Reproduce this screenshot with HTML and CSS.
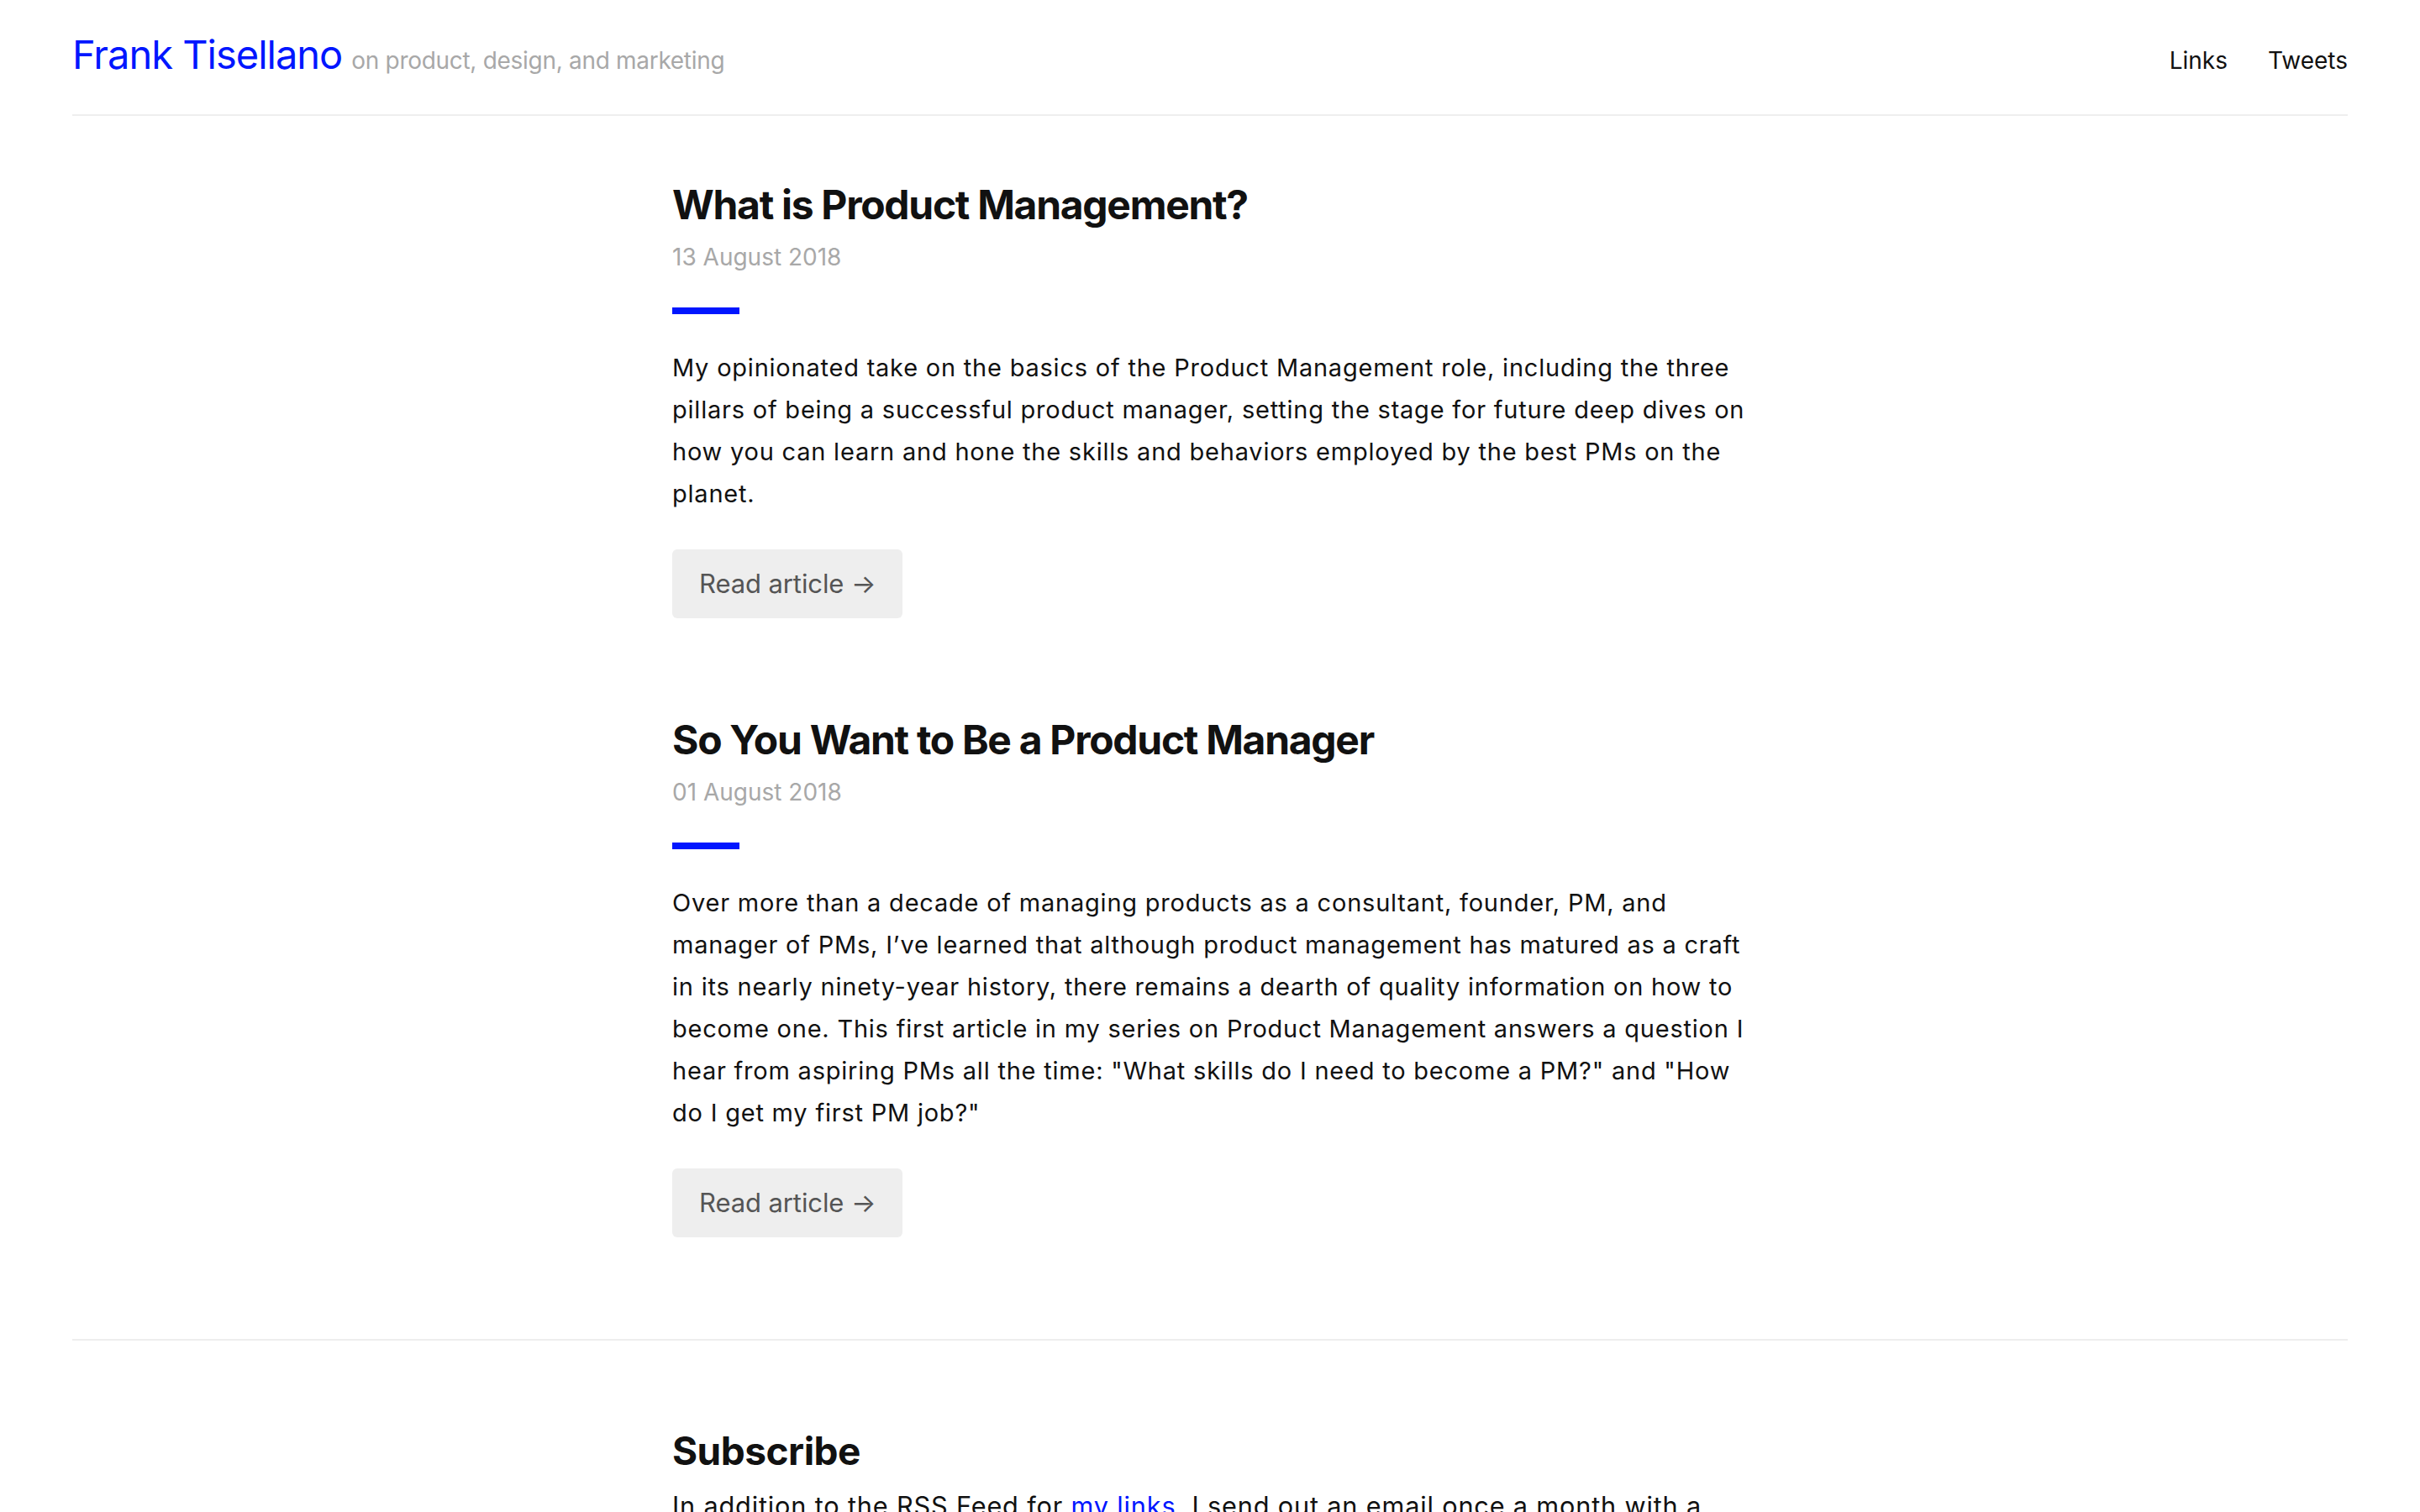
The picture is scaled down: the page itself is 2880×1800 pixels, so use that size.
FILE: index.html
```html
<!DOCTYPE html>
<html lang="en">
<head>
<meta charset="utf-8">
<title>Frank Tisellano</title>
<link rel="stylesheet" href="styles.css">
</head>
<body>
<div class="page">
  <header class="site-header">
    <div class="brand">
      <a class="site-title" href="#">Frank Tisellano</a>
      <span class="tagline">on product, design, and marketing</span>
    </div>
    <nav class="nav">
      <a href="#">Links</a>
      <a href="#">Tweets</a>
    </nav>
  </header>

  <main class="column">
    <article class="post">
      <h2 class="post-title">What is Product Management?</h2>
      <div class="post-date">13 August 2018</div>
      <div class="accent"></div>
      <p class="post-excerpt">My opinionated take on the basics of the Product Management role, including the three pillars of being a successful product manager, setting the stage for future deep dives on how you can learn and hone the skills and behaviors employed by the best PMs on the planet.</p>
      <a class="btn" href="#">Read article →</a>
    </article>

    <article class="post">
      <h2 class="post-title">So You Want to Be a Product Manager</h2>
      <div class="post-date">01 August 2018</div>
      <div class="accent"></div>
      <p class="post-excerpt">Over more than a decade of managing products as a consultant, founder, PM, and manager of PMs, I’ve learned that although product management has matured as a craft in its nearly ninety-year history, there remains a dearth of quality information on how to become one. This first article in my series on Product Management answers a question I hear from aspiring PMs all the time: "What skills do I need to become a PM?" and "How do I get my first PM job?"</p>
      <a class="btn" href="#">Read article →</a>
    </article>
  </main>

  <hr class="rule">

  <section class="column subscribe">
    <h2 class="sub-title">Subscribe</h2>
    <p class="sub-text">In addition to the RSS Feed for <a class="inline-link" href="#">my links</a>, I send out an email once a month with a roundup of my latest writing, plus the most interesting things I’ve read, watched, and listened to.</p>
  </section>
</div>
</body>
</html>
```

FILE: styles.css
```css
html, body {
  margin: 0;
  padding: 0;
  background: #fff;
}

body {
  font-family: Inter, "Noto Sans", "Liberation Sans", sans-serif;
  color: #111;
}

.page {
  padding: 0 86px;
}

a {
  text-decoration: none;
}

.site-header {
  display: flex;
  justify-content: space-between;
  align-items: baseline;
  padding: 36px 0 42px;
  border-bottom: 2px solid #eeeeee;
}

.brand {
  display: flex;
  align-items: baseline;
  gap: 11px;
}

.site-title {
  font-size: 47px;
  line-height: 58px;
  font-weight: 400;
  color: #0016ff;
  letter-spacing: -1px;
}

.tagline {
  font-size: 28px;
  color: #a8a8a8;
  letter-spacing: -0.3px;
}

.nav {
  display: flex;
  gap: 48px;
  align-items: baseline;
}

.nav a {
  font-size: 28px;
  color: #111;
}

.column {
  max-width: 1280px;
  margin: 0 auto;
}

main.column {
  padding-top: 77px;
}

.post {
  margin-bottom: 116px;
}

.post:last-child {
  margin-bottom: 0;
}

.post-title {
  margin: 0;
  font-size: 48px;
  line-height: 58px;
  font-weight: 700;
  letter-spacing: -1.3px;
  color: #111;
}

.post-date {
  margin-top: 13px;
  font-size: 28px;
  line-height: 40px;
  color: #a8a8a8;
}

.accent {
  width: 80px;
  height: 8px;
  margin-top: 40px;
  background: #0016ff;
}

.post-excerpt {
  margin: 39px 0 41px;
  font-size: 29px;
  line-height: 50px;
  letter-spacing: 0.78px;
  color: #111;
}

.btn {
  display: inline-block;
  padding: 17px 32px;
  font-size: 31px;
  line-height: 48px;
  letter-spacing: -0.1px;
  color: #555;
  background: #eeeeee;
  border-radius: 6px;
}

.rule {
  margin: 121px 0 0;
  border: 0;
  height: 2px;
  background: #eeeeee;
}

.subscribe {
  padding-top: 104px;
}

.sub-title {
  margin: 0;
  font-size: 46px;
  line-height: 54px;
  font-weight: 700;
  letter-spacing: -0.5px;
}

.sub-text {
  margin: 12px 0 0;
  font-size: 30.7px;
  line-height: 54px;
  letter-spacing: 0.82px;
  color: #111;
}

.inline-link {
  color: #0016ff;
}
```
